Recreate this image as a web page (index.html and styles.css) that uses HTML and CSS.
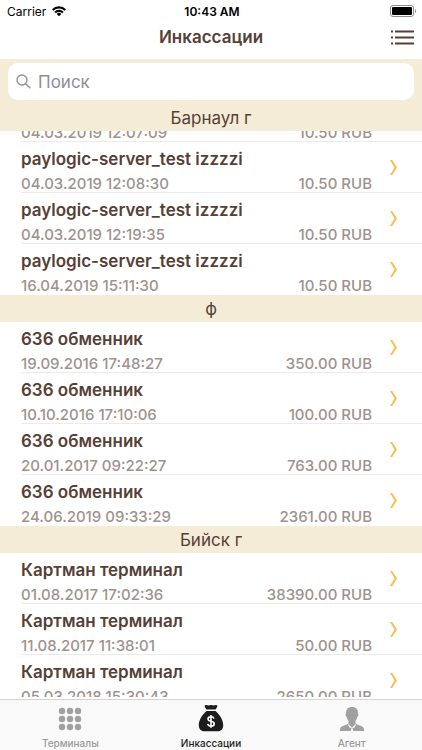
FILE: index.html
```html
<!DOCTYPE html>
<html lang="ru">
<head>
    <meta charset="UTF-8">
    <meta name="viewport" content="width=device-width, initial-scale=1.0">
    <title>Инкассации</title>
    <link rel="stylesheet" href="styles.css">
</head>
<body>

    <div class="app">
        <div class="status-bar">
            <div class="carrier">
                <span>Carrier</span>
                <svg class="wifi" viewBox="0 0 14 10" width="14" height="10">
                    <path d="M0 3.200a9.800 9.800 0 0 1 14 0l-1.500 1.600a7.600 7.600 0 0 0-11 0z"/>
                    <path d="M2.400 5.700a6.400 6.400 0 0 1 9.200 0l-1.500 1.500a4.400 4.400 0 0 0-6.200 0z"/>
                    <path d="M4.700 8a3.200 3.200 0 0 1 4.600 0L7 10.300z"/>
                </svg>
            </div>
            <span class="clock">10:43 AM</span>
            <svg class="battery" viewBox="0 0 27 12" width="27" height="12">
                <rect x="0.5" y="0.5" width="23" height="11" rx="2.5" fill="none" stroke="#8c8c8c"/>
                <rect x="2" y="2" width="20" height="8" rx="1"/>
                <path d="M25 4v4c1.6-0.7 1.6-3.3 0-4z" fill="#8c8c8c"/>
            </svg>
        </div>

        <header class="nav-bar">
            <h1>Инкассации</h1>
            <button class="menu" type="button" aria-label="Меню">
                <svg viewBox="0 0 23 15" width="23" height="15">
                    <path d="M0 1.5h2M4 1.5h19M0 7.5h2M4 7.5h19M0 13.5h2M4 13.5h19"/>
                </svg>
            </button>
        </header>

        <form class="search">
            <label class="search-box">
                <svg viewBox="0 0 15 15" width="15" height="15">
                    <circle cx="6" cy="6" r="5"/>
                    <path d="M9.7 9.7l4.6 4.6"/>
                </svg>
                <input type="search" placeholder="Поиск" aria-label="Поиск">
            </label>
        </form>

        <main class="list">
            <section>
                <h2>Барнаул г</h2>
                <ul class="scrolled">
                    <li><a href="#"><strong>paylogic-server_test izzzzi</strong><time>04.03.2019 12:07:09</time><span class="sum">10.50 RUB</span></a></li>
                    <li><a href="#"><strong>paylogic-server_test izzzzi</strong><time>04.03.2019 12:08:30</time><span class="sum">10.50 RUB</span></a></li>
                    <li><a href="#"><strong>paylogic-server_test izzzzi</strong><time>04.03.2019 12:19:35</time><span class="sum">10.50 RUB</span></a></li>
                    <li><a href="#"><strong>paylogic-server_test izzzzi</strong><time>16.04.2019 15:11:30</time><span class="sum">10.50 RUB</span></a></li>
                </ul>
            </section>
            <section>
                <h2>ф</h2>
                <ul>
                    <li><a href="#"><strong>636 обменник</strong><time>19.09.2016 17:48:27</time><span class="sum">350.00 RUB</span></a></li>
                    <li><a href="#"><strong>636 обменник</strong><time>10.10.2016 17:10:06</time><span class="sum">100.00 RUB</span></a></li>
                    <li><a href="#"><strong>636 обменник</strong><time>20.01.2017 09:22:27</time><span class="sum">763.00 RUB</span></a></li>
                    <li><a href="#"><strong>636 обменник</strong><time>24.06.2019 09:33:29</time><span class="sum">2361.00 RUB</span></a></li>
                </ul>
            </section>
            <section>
                <h2>Бийск г</h2>
                <ul>
                    <li><a href="#"><strong>Картман терминал</strong><time>01.08.2017 17:02:36</time><span class="sum">38390.00 RUB</span></a></li>
                    <li><a href="#"><strong>Картман терминал</strong><time>11.08.2017 11:38:01</time><span class="sum">50.00 RUB</span></a></li>
                    <li><a href="#"><strong>Картман терминал</strong><time>05.03.2018 15:30:43</time><span class="sum">2650.00 RUB</span></a></li>
                </ul>
            </section>
        </main>

        <nav class="tab-bar">
            <a href="#">
                <svg viewBox="0 0 26 28" width="26" height="28">
                    <circle cx="5" cy="6" r="3.2"/><circle cx="13" cy="6" r="3.2"/><circle cx="21" cy="6" r="3.2"/>
                    <circle cx="5" cy="14" r="3.2"/><circle cx="13" cy="14" r="3.2"/><circle cx="21" cy="14" r="3.2"/>
                    <circle cx="5" cy="22" r="3.2"/><circle cx="13" cy="22" r="3.2"/><circle cx="21" cy="22" r="3.2"/>
                </svg>
                <span>Терминалы</span>
            </a>
            <a href="#" class="active">
                <svg viewBox="0 0 26 28" width="26" height="28">
                    <path d="M7 0.5c1.5-1 2.7 0.3 4 0 1.4-0.6 2.6-0.6 4 0 1.3 0.3 2.5-1 4 0 0.6 0.5 0.3 1.3-0.2 2L17.6 4.5H8.4L7.2 2.5C6.7 1.8 6.5 1 7 0.5z"/>
                    <path d="M8.5 6h9c3.5 3 7.700 8.500 7.700 14 0 4-2 6.300-6 6.300H6.800c-4 0-6-2.300-6-6.300C0.800 14.500 5 9 8.500 6z"/>
                    <path class="sign" d="M16 13.600c-0.400-1.300-1.500-1.900-3-1.900-1.800 0-3 0.900-3 2.300 0 3.300 6.200 1.300 6.200 4.700 0 1.500-1.300 2.400-3.200 2.400-1.800 0-3-0.800-3.300-2.200M13 10v12.800"/>
                </svg>
                <span>Инкассации</span>
            </a>
            <a href="#">
                <svg viewBox="0 0 26 28" width="26" height="28">
                    <path d="M13 2c4.200 0 6.200 2.300 5.800 6.500 1 0.200 0.800 2.800-0.500 3.500-0.400 2-1.100 3-1.800 4v2.500c1.800 1.700 7 2 8.200 4.500 0.400 1 0.500 2 0.500 3H0.800c0-1 0.100-2 0.500-3 1.200-2.500 6.400-2.800 8.200-4.500V16c-0.700-1-1.400-2-1.800-4-1.300-0.700-1.500-3.300-0.500-3.500C6.800 4.300 8.800 2 13 2z"/>
                    <path class="collar" d="M12 22.300h2l-0.500 1.200 0.900 2.700h-2.800l0.900-2.700z"/>
                    <path class="collar" d="M9.500 19l3 3-1.500 1.300-2-3.300zM16.500 19l-3 3 1.500 1.300 2-3.300z"/>
                </svg>
                <span>Агент</span>
            </a>
        </nav>
    </div>

</body>
</html>
```
FILE: styles.css
```css
* {
    box-sizing: border-box;
}

body {
    margin: 0;
    font-family: Inter, "Liberation Sans", sans-serif;
    background-color: #fff;
    color: #573f36;
}

a {
    color: inherit;
    text-decoration: none;
}

.app {
    display: flex;
    flex-direction: column;
    height: 100vh;
    overflow: hidden;
}

.status-bar {
    display: grid;
    grid-template-columns: 1fr auto 1fr;
    align-items: center;
    height: 22px;
    padding: 0 5px 0 7px;
    color: #000;
    font-size: 12px;
}

.carrier {
    display: flex;
    align-items: center;
    gap: 6px;
}

.clock {
    font-weight: 600;
}

.battery {
    justify-self: end;
}

.nav-bar {
    display: grid;
    grid-template-columns: 1fr auto 1fr;
    align-items: center;
    height: 37px;
    padding: 0 8px 6px;
}

.nav-bar h1 {
    grid-column: 2;
    margin: 0;
    font-size: 17px;
    font-weight: 600;
    line-height: 31px;
}

.menu {
    justify-self: end;
    display: flex;
    padding: 0;
    border: none;
    background: none;
}

.menu svg {
    stroke: #573f36;
    stroke-width: 2;
}

.search {
    padding: 4px 8px;
    background-color: #f5ecd8;
}

.search-box {
    display: flex;
    align-items: center;
    gap: 7px;
    height: 37px;
    padding: 0 8px;
    border-radius: 10px;
    background-color: #fff;
}

.search-box svg {
    fill: none;
    stroke: #8e8e93;
    stroke-width: 1.3;
}

.search-box input {
    flex: 1;
    min-width: 0;
    padding: 0;
    border: none;
    outline: none;
    background: none;
    color: #573f36;
    font: 17px Inter, "Liberation Sans", sans-serif;
}

.search-box input::placeholder {
    color: #8e8e93;
}

.list {
    flex: 1;
    min-height: 0;
    margin-bottom: 2px;
    overflow: hidden;
}

.list h2 {
    position: sticky;
    top: 0;
    z-index: 1;
    margin: 0;
    padding-top: 1px;
    background-color: #f5ecd8;
    font-size: 17px;
    font-weight: 400;
    line-height: 26px;
    text-align: center;
}

.list ul {
    margin: 0;
    padding: 0;
    list-style: none;
}

/* first section is scrolled under its header */
.list .scrolled {
    margin-top: -40px;
}

.list a {
    display: grid;
    grid-template-columns: 1fr auto;
    grid-template-rows: 30px 18px;
    align-items: center;
    position: relative;
    height: 51px;
    margin-left: 21px;
    padding: 2px 50px 0 0;
    border-bottom: 1px solid #ebebed;
}

.list li:last-child a {
    border-bottom-color: transparent;
}

.list a::after {
    content: "";
    position: absolute;
    top: 18px;
    right: 25px;
    width: 7px;
    height: 15px;
    background-color: #f7bf4f;
    clip-path: polygon(0 0, 32% 0, 100% 50%, 32% 100%, 0 100%, 65% 50%);
}

.list strong {
    grid-column: 1 / -1;
    font-size: 17px;
    font-weight: 600;
}

.list time,
.sum {
    color: #9e928d;
    font-size: 15px;
    font-weight: 500;
}

.tab-bar {
    display: grid;
    grid-template-columns: repeat(3, 1fr);
    height: 51px;
    padding-top: 5px;
    border-top: 1px solid #d5d5d5;
    background-color: #f9f9f9;
    color: #999;
    font-size: 10px;
    font-weight: 500;
}

.tab-bar a {
    display: flex;
    flex-direction: column;
    align-items: center;
    gap: 4px;
}

.tab-bar svg {
    fill: #a0a0a0;
}

.tab-bar .active,
.tab-bar .active svg {
    color: #1c1c1c;
    fill: #1c1c1c;
}

.tab-bar .sign {
    fill: none;
    stroke: #fff;
    stroke-width: 1.6;
}

.tab-bar .collar {
    fill: #f9f9f9;
}
```
